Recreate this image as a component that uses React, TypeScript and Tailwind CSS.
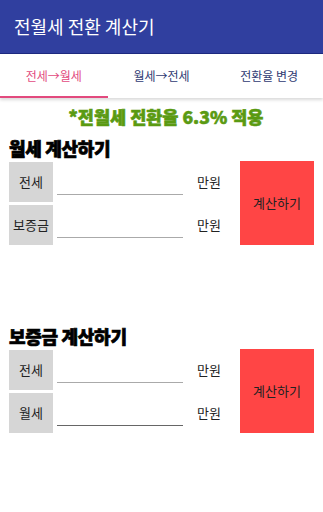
const font = { fontFamily: '"Noto Sans CJK KR", "Noto Sans", sans-serif' };

function InputRow({ label, dark }: { label: string; dark?: boolean }) {
  return (
    <div className="flex items-center h-[40px]">
      <div className="w-[44px] h-full bg-[#d6d6d6] flex items-center justify-center text-[13px] text-[#222]">
        {label}
      </div>
      <div className="ml-[4px] w-[126px] h-full">
        <div className={`h-[33px] border-b ${dark ? 'border-[#666]' : 'border-[#aaa]'}`} />
      </div>
      <div className="ml-[14px] text-[13px] text-[#222]">만원</div>
    </div>
  );
}

function Section({ title, rows }: { title: string; rows: string[] }) {
  return (
    <section className="px-[9px]">
      <h2 className="h-[24px] leading-[24px] text-[18px] font-black text-black tracking-[-0.3px] [-webkit-text-stroke:0.7px_black]">
        {title}
      </h2>
      <div className="mt-[1px] flex items-start">
        <div className="flex flex-col gap-[3px] pt-[1px]">
          {rows.map((r, i) => (
            <InputRow key={r} label={r} dark={title.startsWith('보증금') && i === 1} />
          ))}
        </div>
        <button className="ml-auto w-[74px] h-[84px] bg-[#ff4545] text-[13px] text-[#222] flex items-center justify-center">
          계산하기
        </button>
      </div>
    </section>
  );
}

export default function App() {
  return (
    <div className="w-[323px] h-[512px] bg-white overflow-hidden" style={font}>
      {/* APP BAR */}
      <header className="h-[54px] bg-[#303f9f] border-b border-[#1e2a80] px-[14px] flex items-center">
        <h1 className="text-[18px] text-white">전월세 전환 계산기</h1>
      </header>

      {/* TABS */}
      <nav className="h-[44px] flex bg-white shadow-[0_2px_3px_rgba(0,0,0,0.15)] relative">
        <div className="flex-1 flex items-center justify-center text-[12px] text-[#e24a7e] relative">
          전세→월세
          <div className="absolute left-0 right-0 bottom-0 h-[2px] bg-[#e24a7e]" />
        </div>
        <div className="flex-1 flex items-center justify-center text-[12px] text-[#2f3a72]">월세→전세</div>
        <div className="flex-1 flex items-center justify-center text-[12px] text-[#2f3a72]">전환율 변경</div>
      </nav>

      <p className="mt-[7px] pl-[9px] h-[24px] leading-[24px] text-center text-[17.5px] font-black text-[#5a9a12] [-webkit-text-stroke:0.6px_#5a9a12]">
        *전월세 전환율 6.3% 적용
      </p>

      <div className="mt-[7px]">
        <Section title="월세 계산하기" rows={['전세', '보증금']} />
      </div>
      <div className="mt-[79px]">
        <Section title="보증금 계산하기" rows={['전세', '월세']} />
      </div>
    </div>
  );
}
